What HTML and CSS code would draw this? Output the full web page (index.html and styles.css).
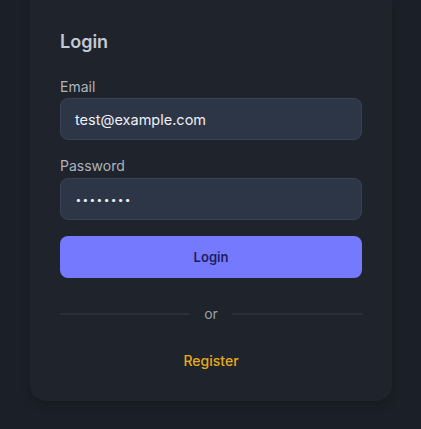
FILE: index.html
```html
<!DOCTYPE html>
<html>
<head>
<meta charset="utf-8">
<link rel="stylesheet" href="styles.css">
</head>
<body>
<div class="page">
  <div class="card">
    <h1 class="title">Login</h1>
    <label class="label">Email</label>
    <div class="input">test@example.com</div>
    <label class="label">Password</label>
    <div class="input pw">••••••••</div>
    <button class="btn">Login</button>
    <div class="divider"><span class="line"></span><span class="or">or</span><span class="line"></span></div>
    <div class="register">Register</div>
  </div>
</div>
</body>
</html>
```
FILE: styles.css
```css
* { box-sizing: border-box; }
html, body { margin: 0; padding: 0; }
body {
  background: #1b2028;
  font-family: Inter, "Noto Sans", sans-serif;
  width: 421px;
  height: 429px;
  overflow: hidden;
}
.page {
  padding: 0 29px 0 30px;
}
.card {
  background: #1f232b;
  border-radius: 0 0 16px 16px;
  padding: 30px 30px 30px;
  display: flex;
  flex-direction: column;
  box-shadow: 0 4px 10px rgba(0,0,0,0.18);
}
.title {
  margin: 0 0 23px;
  font-size: 18px;
  line-height: 24px;
  font-weight: 600;
  color: #c5c9d3;
}
.label {
  font-size: 14px;
  line-height: 20px;
  color: #aeb3bd;
  margin-bottom: 1px;
}
.input {
  height: 42px;
  background: #2d3647;
  border: 1px solid #3a4354;
  border-radius: 8px;
  padding: 0 14px;
  display: flex;
  align-items: center;
  font-size: 14.5px;
  color: #eef0f4;
  margin-bottom: 16px;
}
.input.pw {
  font-size: 10px;
  letter-spacing: 2.3px;
  font-weight: 700;
  padding-left: 15px;
}
.label + .input.pw { margin-top: 1px; }
.btn {
  height: 42px;
  border: none;
  border-radius: 8px;
  background: #7479fe;
  color: #1d1d5c;
  font-family: inherit;
  font-size: 13px;
  font-weight: 600;
  margin-bottom: 26px;
}
.divider {
  display: flex;
  align-items: center;
  gap: 14px;
  height: 20px;
  margin-bottom: 27px;
}
.line {
  flex: 1;
  height: 2px;
  background: #2a2f38;
}
.or {
  font-size: 14px;
  line-height: 20px;
  color: #9aa0ab;
}
.register {
  text-align: center;
  font-size: 14px;
  line-height: 20px;
  font-weight: 500;
  color: #e6aa20;
}
```
